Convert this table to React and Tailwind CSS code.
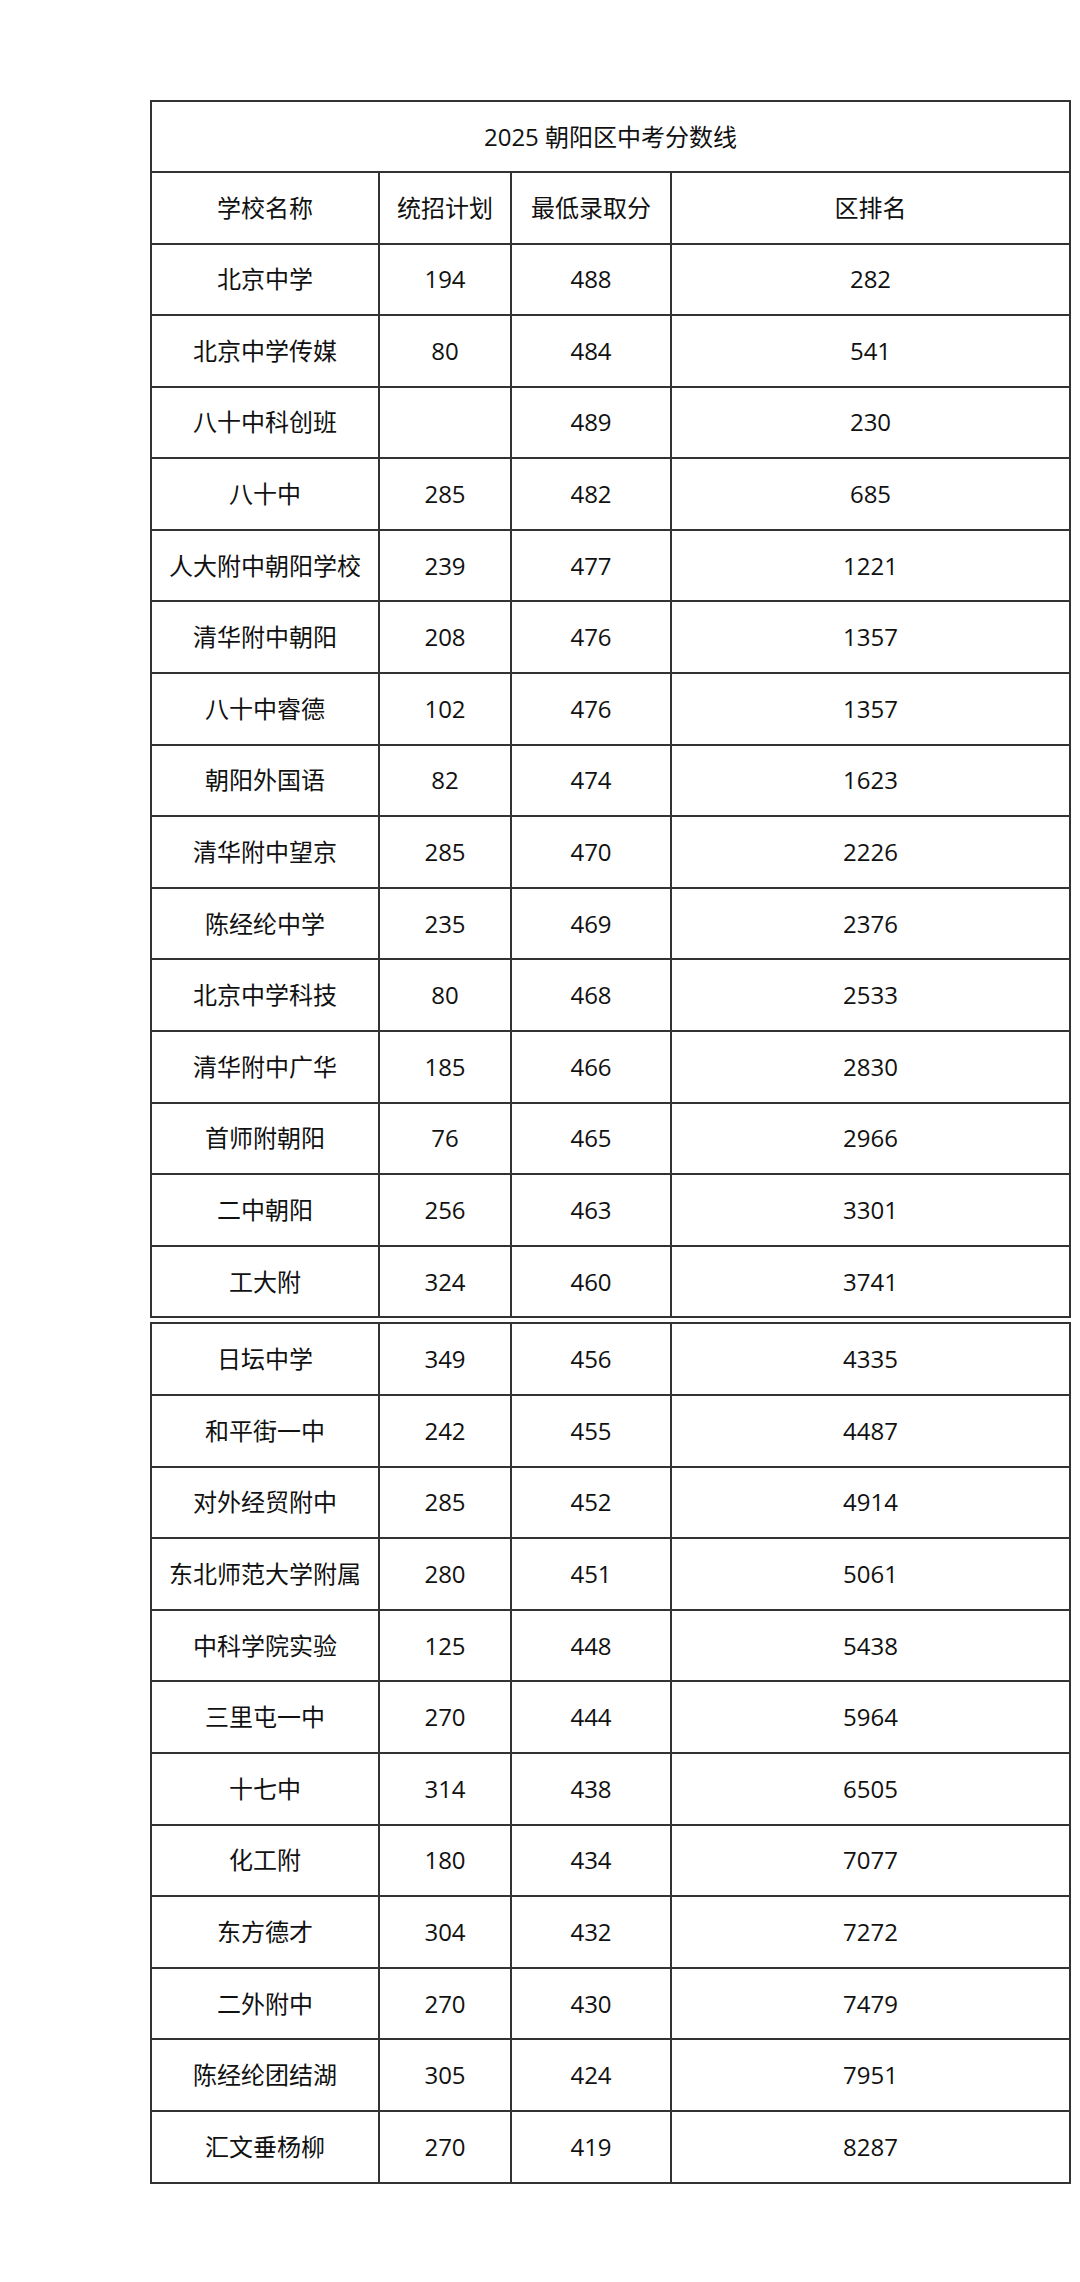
const rowsA = [
  ["北京中学", "194", "488", "282"],
  ["北京中学传媒", "80", "484", "541"],
  ["八十中科创班", "", "489", "230"],
  ["八十中", "285", "482", "685"],
  ["人大附中朝阳学校", "239", "477", "1221"],
  ["清华附中朝阳", "208", "476", "1357"],
  ["八十中睿德", "102", "476", "1357"],
  ["朝阳外国语", "82", "474", "1623"],
  ["清华附中望京", "285", "470", "2226"],
  ["陈经纶中学", "235", "469", "2376"],
  ["北京中学科技", "80", "468", "2533"],
  ["清华附中广华", "185", "466", "2830"],
  ["首师附朝阳", "76", "465", "2966"],
  ["二中朝阳", "256", "463", "3301"],
  ["工大附", "324", "460", "3741"],
];

const rowsB = [
  ["日坛中学", "349", "456", "4335"],
  ["和平街一中", "242", "455", "4487"],
  ["对外经贸附中", "285", "452", "4914"],
  ["东北师范大学附属", "280", "451", "5061"],
  ["中科学院实验", "125", "448", "5438"],
  ["三里屯一中", "270", "444", "5964"],
  ["十七中", "314", "438", "6505"],
  ["化工附", "180", "434", "7077"],
  ["东方德才", "304", "432", "7272"],
  ["二外附中", "270", "430", "7479"],
  ["陈经纶团结湖", "305", "424", "7951"],
  ["汇文垂杨柳", "270", "419", "8287"],
];

const Row = ({cells, h = "h-[71.6px]"}) => (
  <div className={`grid grid-cols-[228px_132px_160px_397px] border-b-2 border-[#333] ${h}`}>
    {cells.map((c, i) => (
      <div
        key={i}
        className={`flex items-center justify-center ${i < 3 ? "border-r-2 border-[#333]" : ""}`}
      >
        {c}
      </div>
    ))}
  </div>
);

export default function App() {
  return (
    <div
      className="min-h-[2282px] bg-white pl-[150px] pt-[100px] text-[24px] text-[#111]"
      style={{fontFamily: '"Open Sans", "Noto Sans CJK SC", sans-serif'}}
    >
      {/* first block */}
      <div className="w-[921px] border-x-2 border-t-2 border-[#333]">
        <div className="flex h-[71px] items-center justify-center border-b-2 border-[#333]">
          2025 朝阳区中考分数线
        </div>
        <Row cells={["学校名称", "统招计划", "最低录取分", "区排名"]} h="h-[71.5px]" />
        {rowsA.map((r) => (
          <Row key={r[0]} cells={r} />
        ))}
      </div>

      {/* second block */}
      <div className="mt-[4px] w-[921px] border-x-2 border-t-2 border-[#333]">
        {rowsB.map((r) => (
          <Row key={r[0]} cells={r} />
        ))}
      </div>
    </div>
  );
}
